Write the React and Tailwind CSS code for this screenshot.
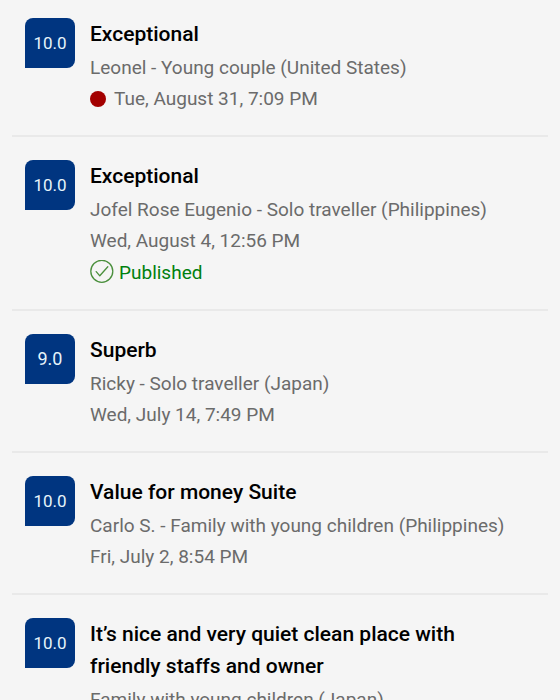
const reviews = [
  { score: '10.0', title: 'Exceptional', guest: 'Leonel - Young couple (United States)', date: 'Tue, August 31, 7:09 PM', unread: true },
  { score: '10.0', title: 'Exceptional', guest: 'Jofel Rose Eugenio - Solo traveller (Philippines)', date: 'Wed, August 4, 12:56 PM', published: true },
  { score: '9.0', title: 'Superb', guest: 'Ricky - Solo traveller (Japan)', date: 'Wed, July 14, 7:49 PM' },
  { score: '10.0', title: 'Value for money Suite', guest: 'Carlo S. - Family with young children (Philippines)', date: 'Fri, July 2, 8:54 PM' },
  { score: '10.0', title: 'It’s nice and very quiet clean place with friendly staffs and owner', guest: 'Family with young children (Japan)' },
];

function Review({ score, title, guest, date, unread, published }) {
  // Four-character scores are set slightly smaller to keep room inside the badge.
  const scoreSize = score.length > 3 ? 'text-[17px]' : 'text-[18px]';
  return (
    <li className="flex gap-[15px] border-b-2 border-[#e9e9e9] px-[13px] pt-[23px] pb-[21px] first:pt-[18px] last:border-b-0 last:pb-0">
      <div className={`flex h-[50px] w-[50px] shrink-0 items-center justify-center rounded-lg rounded-bl-none bg-[#003580] leading-7 text-[#e6f4fa] ${scoreSize}`}>
        {score}
      </div>
      <div className="min-w-0 flex-1 text-[19px] leading-[31px] text-[#6b6b6b]">
        <h2 className="mb-[2px] max-w-[400px] text-[21px] leading-8 font-medium text-black">{title}</h2>
        <p>{guest}</p>
        {date && (
          <p className="flex items-center gap-2">
            {unread && <span className="h-4 w-4 rounded-full bg-[#a30000]" role="img" aria-label="New" />}
            {date}
          </p>
        )}
        {published && (
          <p className="flex h-8 items-center gap-[5px] text-[#00800e]">
            <svg className="h-6 w-6 text-[#4a8f3c]" viewBox="0 0 24 24" fill="none" stroke="currentColor" strokeWidth="1.3" strokeLinecap="round" strokeLinejoin="round" aria-hidden="true">
              <circle cx="11.8" cy="11.3" r="11" />
              <path d="M6.2 11.6l3.6 4.2 8-9" />
            </svg>
            Published
          </p>
        )}
      </div>
    </li>
  );
}

export default function App() {
  return (
    <main className="min-h-screen bg-[#f5f5f5] font-['Roboto',sans-serif]">
      <ul className="px-3">
        {reviews.map((review) => (
          <Review key={review.guest} {...review} />
        ))}
      </ul>
    </main>
  );
}
